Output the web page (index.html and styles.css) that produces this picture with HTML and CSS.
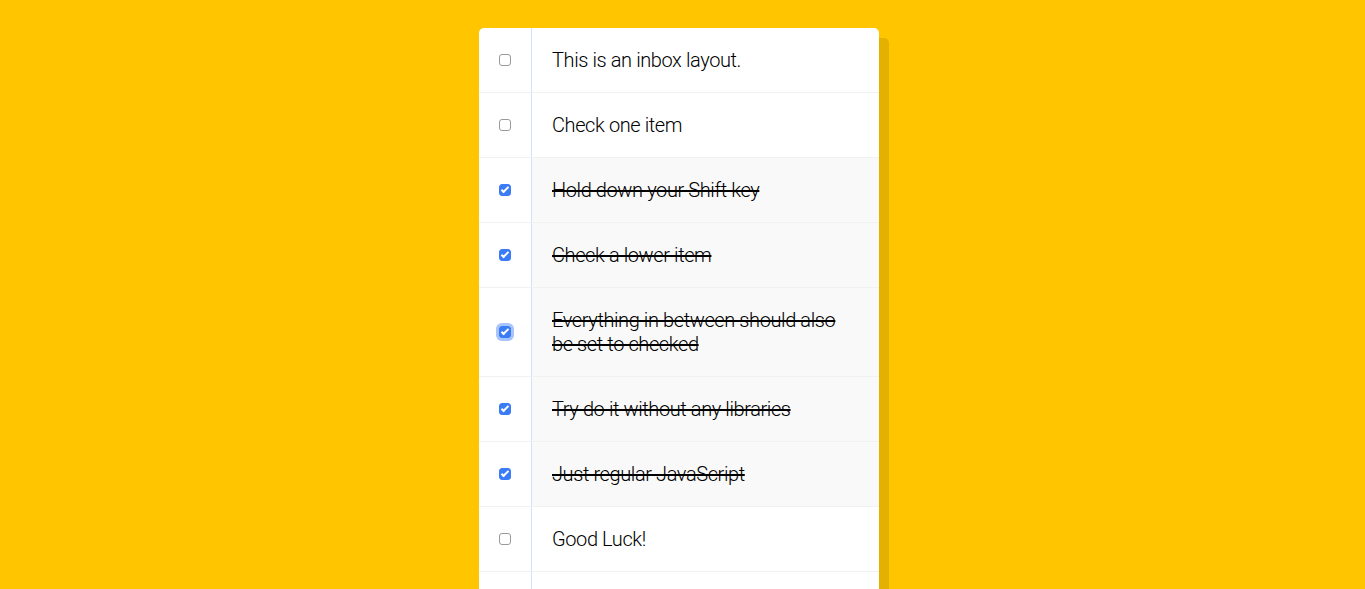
FILE: index.html
```html
<!DOCTYPE html>
<html lang="en">
<head>
<meta charset="utf-8">
<title>Inbox</title>
<link rel="stylesheet" href="styles.css">
</head>
<body>
<div class="inbox">
  <div class="item"><input type="checkbox"><p>This is an inbox layout.</p></div>
  <div class="item"><input type="checkbox"><p>Check one item</p></div>
  <div class="item"><input type="checkbox" checked><p>Hold down your Shift key</p></div>
  <div class="item"><input type="checkbox" checked><p>Check a lower item</p></div>
  <div class="item"><input type="checkbox" class="focused" checked><p>Everything in between should also be set to checked</p></div>
  <div class="item"><input type="checkbox" checked><p>Try do it without any libraries</p></div>
  <div class="item"><input type="checkbox" checked><p>Just regular JavaScript</p></div>
  <div class="item"><input type="checkbox"><p>Good Luck!</p></div>
  <div class="item"><input type="checkbox"><p>Don't forget to tweet your result!</p></div>
</div>
</body>
</html>
```
FILE: styles.css
```css
html {
  background: #ffc600;
}
body {
  margin: 0;
  padding: 0 7px 0 0;
  font-family: "Helvetica Neue", Roboto, "Liberation Sans", sans-serif;
}
.inbox {
  max-width: 400px;
  margin: 28px auto;
  background: #ffffff;
  border-radius: 5px;
  box-shadow: 10px 10px 0 rgba(0, 0, 0, 0.1);
}
.item {
  display: flex;
  align-items: center;
  border-bottom: 1px solid #f1f1f1;
}
.item:last-child {
  border-bottom: 0;
}
input[type="checkbox"] {
  appearance: none;
  -webkit-appearance: none;
  position: relative;
  box-sizing: border-box;
  margin: 20px;
  width: 12px;
  height: 12px;
  border: 1px solid #9a9a9a;
  border-radius: 3px;
  background: #ffffff;
  flex: none;
}
input[type="checkbox"]:checked {
  background: #3b7cf6;
  border-color: #3b7cf6;
}
input[type="checkbox"]:checked::after {
  content: "";
  position: absolute;
  left: 3px;
  top: 0;
  width: 2px;
  height: 6px;
  border: solid #ffffff;
  border-width: 0 2px 2px 0;
  transform: rotate(45deg);
}
input.focused {
  box-shadow: 0 0 0 3px rgba(59, 124, 246, 0.45);
}
input:checked + p {
  background: #f9f9f9;
  text-decoration: line-through;
}
p {
  margin: 0;
  padding: 20px;
  flex: 1;
  font-size: 20px;
  line-height: 24px;
  font-weight: 300;
  letter-spacing: -0.4px;
  color: #000;
  border-left: 1px solid #d1e2ff;
}
```
